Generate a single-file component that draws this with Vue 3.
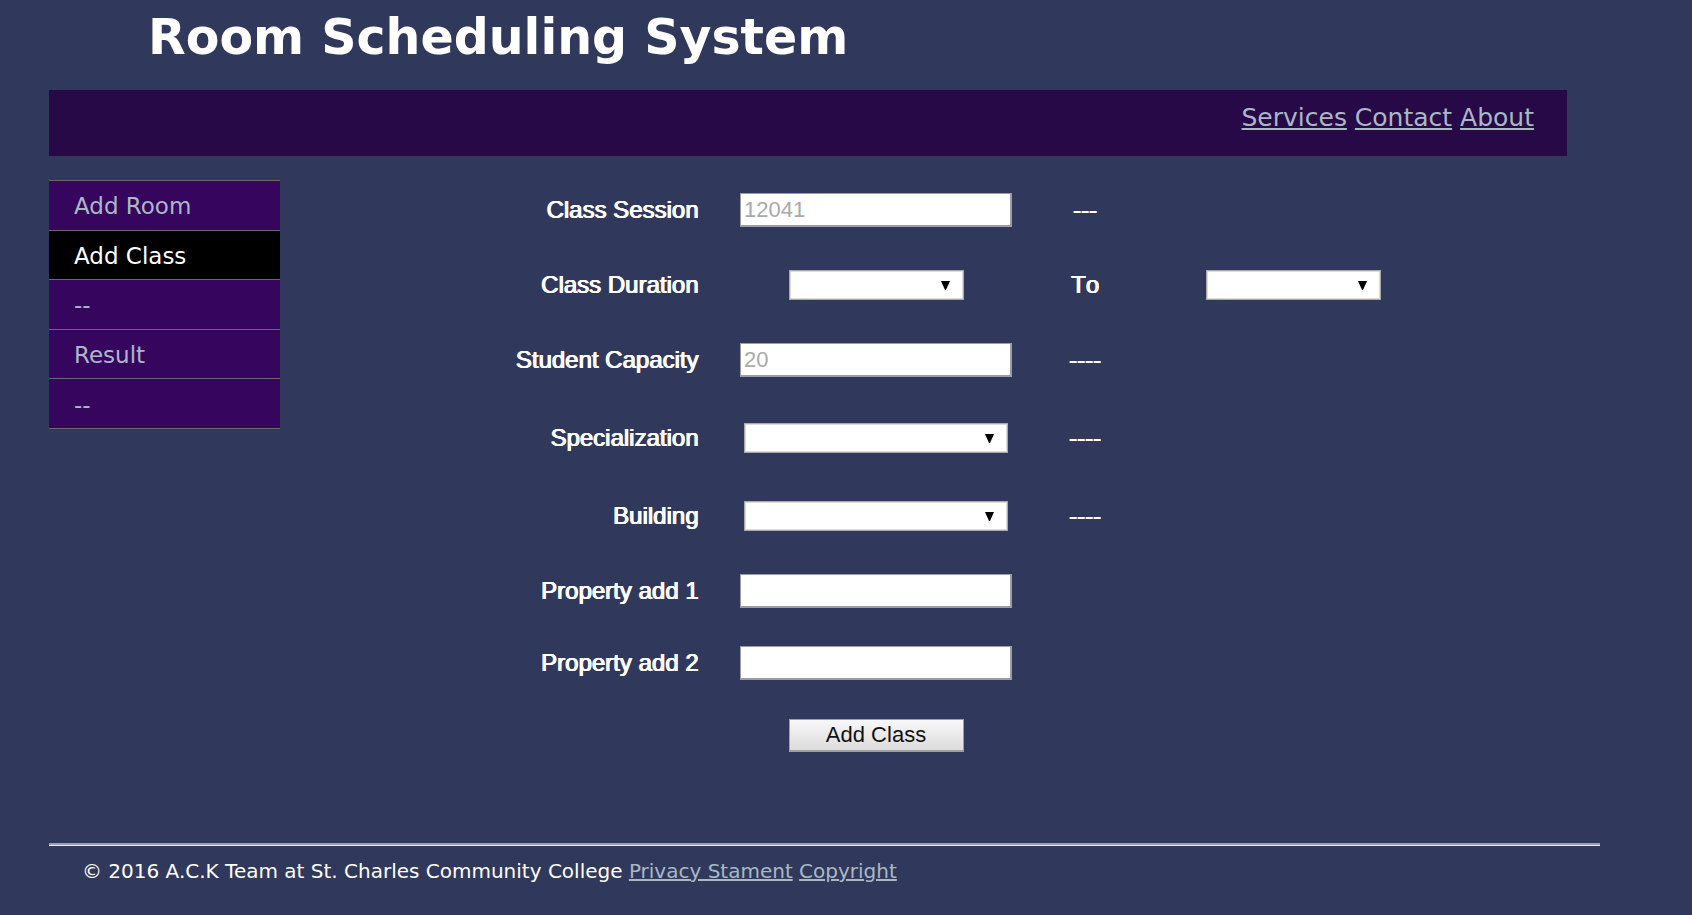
<script setup>
import { reactive } from 'vue'

const menu = [
  { label: 'Add Room' },
  { label: 'Add Class', active: true },
  { label: '--' },
  { label: 'Result' },
  { label: '--' },
]

const rows = [
  { id: 'session', label: 'Class Session', type: 'text', placeholder: '12041', note: '---' },
  { id: 'start', label: 'Class Duration', type: 'time', note: 'To', endId: 'end' },
  { id: 'capacity', label: 'Student Capacity', type: 'text', placeholder: '20', note: '----' },
  { id: 'specialization', label: 'Specialization', type: 'select', note: '----' },
  { id: 'building', label: 'Building', type: 'select', note: '----' },
  { id: 'property1', label: 'Property add 1', type: 'text' },
  { id: 'property2', label: 'Property add 2', type: 'text' },
]

const values = reactive({})
</script>

<template>
  <div class="page">
    <header>
      <h1>Room Scheduling System</h1>
      <nav class="top-nav">
        <a href="#">Services</a>{{ ' ' }}<a href="#">Contact</a>{{ ' ' }}<a href="#">About</a>
      </nav>
    </header>

    <main>
      <nav class="side-nav">
        <ul>
          <li v-for="(item, i) in menu" :key="i">
            <a href="#" :class="{ active: item.active }">{{ item.label }}</a>
          </li>
        </ul>
      </nav>

      <form @submit.prevent>
        <template v-for="row in rows" :key="row.id">
          <label class="name strong" :for="row.id">{{ row.label }}</label>
          <input
            v-if="row.type === 'text'"
            :id="row.id"
            v-model="values[row.id]"
            class="field"
            type="text"
            :placeholder="row.placeholder"
          />
          <span v-else class="drop" :class="{ short: row.type === 'time' }">
            <select :id="row.id" v-model="values[row.id]"></select>
            <svg viewBox="0 0 9 9" aria-hidden="true"><path d="M0 0h9L5 9H4z" /></svg>
          </span>
          <label v-if="row.endId" class="note strong" :for="row.endId">{{ row.note }}</label>
          <span v-else-if="row.note" class="note strong">{{ row.note }}</span>
          <span v-if="row.endId" class="drop short end">
            <select :id="row.endId" v-model="values[row.endId]"></select>
            <svg viewBox="0 0 9 9" aria-hidden="true"><path d="M0 0h9L5 9H4z" /></svg>
          </span>
        </template>
        <button type="submit">Add Class</button>
      </form>
    </main>

    <footer>
      © 2016 A.C.K Team at St. Charles Community College
      <a href="#">Privacy Stament</a>{{ ' ' }}<a href="#">Copyright</a>
    </footer>
  </div>
</template>

<style>
body {
  background: #30385c;
}
</style>

<style scoped>
.page {
  padding: 0 92px 0 49px;
  color: #fff;
  font-family: Verdana, "DejaVu Sans", sans-serif;
}

a {
  color: #a9b8c4;
}

h1 {
  margin: 0;
  padding: 8px 0 22px 99px;
  font-size: 49px;
  line-height: 60px;
}

.top-nav {
  margin-right: 33px;
  padding: 13px 33px 23px;
  background: #270948;
  font-size: 25px;
  line-height: 30px;
  text-align: right;
}

main {
  display: flex;
  align-items: flex-start;
}

.side-nav {
  flex: none;
  width: 231px;
  margin-top: 24px;
}

.side-nav ul {
  display: grid;
  grid-auto-rows: 1fr;
  min-height: 248px;
  margin: 0;
  padding: 0;
  border-top: 1px solid #69696b;
  list-style: none;
}

.side-nav li {
  display: grid;
  border-bottom: 1px solid #69696b;
}

.side-nav a {
  display: flex;
  align-items: center;
  padding: 10px 25px 8px;
  background: #36065f;
  font-size: 23px;
  line-height: 28px;
  text-decoration: none;
}

.side-nav a.active {
  background: #000;
  color: #fff;
}

form {
  flex: 1;
  display: grid;
  grid-template-columns: 418fr 356fr 61fr 356fr 129fr;
  grid-template-rows: 76px 74px 76px 80px 76px 74px 70px 74px;
  align-items: center;
  justify-items: center;
  padding-top: 16px;
  font-family: Arial, "Liberation Sans", sans-serif;
}

.strong {
  font-size: 24px;
  font-kerning: none;
  line-height: 28px;
  text-shadow: 1px 0 #fff, 1px 0 #fff;
}

.name {
  grid-column: 1;
  justify-self: end;
}

.note {
  grid-column: 3;
  white-space: nowrap;
}

.field {
  grid-column: 2;
  box-sizing: border-box;
  width: 272px;
  height: 34px;
  padding: 0 3px;
  border: solid #9a9da6;
  border-width: 1px 2px 2px 1px;
  border-radius: 0;
  background: #fff;
  font-family: inherit;
  font-size: 22px;
}

.field::placeholder {
  color: #a9a9a9;
}

.drop {
  grid-column: 2;
  display: grid;
  width: 264px;
  align-items: center;
}

.drop.short {
  width: 175px;
}

.drop.end {
  grid-column: 4;
}

.drop select,
.drop svg {
  grid-area: 1 / 1;
}

.drop select {
  appearance: none;
  width: 100%;
  height: 30px;
  padding: 0 28px 0 4px;
  border: 1px solid #a9a9a9;
  border-radius: 0;
  box-shadow: inset 0 0 0 1px #dcdcdc;
  background: #fff;
  font-family: inherit;
  font-size: 22px;
}

.drop svg {
  justify-self: end;
  width: 9px;
  height: 9px;
  margin-right: 14px;
  pointer-events: none;
}

button {
  grid-column: 2;
  width: 175px;
  height: 33px;
  padding: 0;
  border: solid #a0a0a0;
  border-width: 1px 1px 2px 1px;
  border-radius: 0;
  background: linear-gradient(#f8f8f8, #dcdcdc);
  color: #111;
  font-family: inherit;
  font-size: 22px;
  line-height: 28px;
}

footer {
  margin-top: 71px;
  padding: 13px 33px;
  border-top: 2px solid #9c9fab;
  box-shadow: inset 0 1px #f0f0f4;
  font-size: 20px;
  line-height: 26px;
}
</style>
